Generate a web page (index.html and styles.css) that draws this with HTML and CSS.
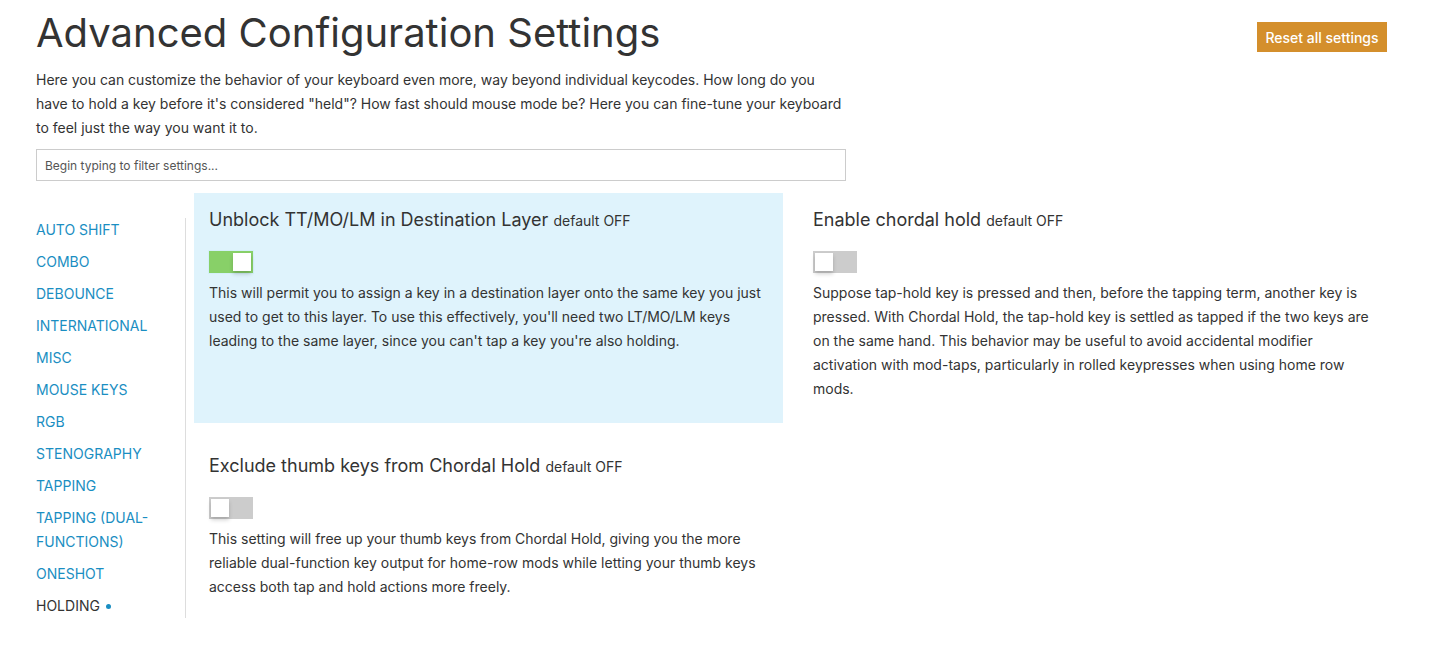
FILE: index.html
```html
<!DOCTYPE html>
<html>
<head>
<meta charset="utf-8">
<link rel="stylesheet" href="styles.css">
</head>
<body>
<div class="page">
  <header class="header">
    <h1 class="title">Advanced Configuration Settings</h1>
    <button class="reset">Reset all settings</button>
  </header>
  <p class="intro">Here you can customize the behavior of your keyboard even more, way beyond individual keycodes. How long do you have to hold a key before it's considered "held"? How fast should mouse mode be? Here you can fine-tune your keyboard to feel just the way you want it to.</p>
  <input class="filter" type="text" placeholder="Begin typing to filter settings...">
  <div class="layout">
    <nav class="sidebar">
      <a class="nav-item">AUTO SHIFT</a>
      <a class="nav-item">COMBO</a>
      <a class="nav-item">DEBOUNCE</a>
      <a class="nav-item">INTERNATIONAL</a>
      <a class="nav-item">MISC</a>
      <a class="nav-item">MOUSE KEYS</a>
      <a class="nav-item">RGB</a>
      <a class="nav-item">STENOGRAPHY</a>
      <a class="nav-item">TAPPING</a>
      <a class="nav-item">TAPPING (DUAL-FUNCTIONS)</a>
      <a class="nav-item">ONESHOT</a>
      <a class="nav-item active">HOLDING <span class="dot"></span></a>
    </nav>
    <main class="grid">
      <section class="card highlight">
        <h3 class="card-title">Unblock TT/MO/LM in Destination Layer <span class="default">default OFF</span></h3>
        <div class="toggle on"><span class="knob"></span></div>
        <p class="desc">This will permit you to assign a key in a destination layer onto the same key you just used to get to this layer. To use this effectively, you'll need two LT/MO/LM keys leading to the same layer, since you can't tap a key you're also holding.</p>
      </section>
      <section class="card">
        <h3 class="card-title">Enable chordal hold <span class="default">default OFF</span></h3>
        <div class="toggle"><span class="knob"></span></div>
        <p class="desc">Suppose tap-hold key is pressed and then, before the tapping term, another key is pressed. With Chordal Hold, the tap-hold key is settled as tapped if the two keys are on the same hand. This behavior may be useful to avoid accidental modifier activation with mod-taps, particularly in rolled keypresses when using home row mods.</p>
      </section>
      <section class="card">
        <h3 class="card-title">Exclude thumb keys from Chordal Hold <span class="default">default OFF</span></h3>
        <div class="toggle"><span class="knob"></span></div>
        <p class="desc">This setting will free up your thumb keys from Chordal Hold, giving you the more reliable dual-function key output for home-row mods while letting your thumb keys access both tap and hold actions more freely.</p>
      </section>
    </main>
  </div>
</div>
</body>
</html>
```
FILE: styles.css
```css
* { box-sizing: border-box; }
html, body { margin: 0; padding: 0; background: #fff; }
body {
  font-family: Inter, "Noto Sans", sans-serif;
  color: #333;
  font-size: 14px;
}
.page {
  width: 1387px;
  padding-left: 36px;
}
.header {
  display: flex;
  justify-content: space-between;
  align-items: flex-start;
}
.title {
  margin: 9px 0 0 0;
  font-size: 40px;
  font-weight: 400;
  line-height: 48px;
  color: #333;
  letter-spacing: 0;
}
.reset {
  margin-top: 22px;
  height: 30px;
  width: 130px;
  padding: 0;
  border: none;
  background: #d48f2c;
  color: #fff;
  font-family: Inter, sans-serif;
  font-size: 14px;
  font-weight: 500;
}
.intro {
  width: 810px;
  margin: 11px 0 9px 0;
  line-height: 24px;
  font-size: 14px;
}
.filter {
  display: block;
  width: 810px;
  height: 32px;
  border: 1px solid #ccc;
  padding: 0 8px;
  font-family: Inter, sans-serif;
  font-size: 12px;
  color: #333;
  outline: none;
}
.filter::placeholder { color: #555; }
.layout {
  display: flex;
  margin-top: 12px;
}
.sidebar {
  width: 150px;
  flex: none;
  margin-top: 25px;
  padding-right: 12px;
  border-right: 1px solid #ddd;
  display: flex;
  flex-direction: column;
  gap: 8px;
  align-self: flex-start;
}
.nav-item {
  color: #1a8ec2;
  font-size: 14px;
  line-height: 24px;
}
.nav-item.active { color: #333; }
.dot {
  display: inline-block;
  width: 5px;
  height: 5px;
  border-radius: 50%;
  background: #1a8ec2;
  vertical-align: middle;
  margin-left: 2px;
  position: relative;
  top: -1px;
}
.grid {
  margin-left: 8px;
  display: grid;
  grid-template-columns: 589px 589px;
  column-gap: 15px;
  row-gap: 16px;
}
.card {
  padding: 15px 15px 22px 15px;
}
.card.highlight { background: #dff3fc; }
.card-title {
  margin: 0;
  font-size: 18px;
  font-weight: 400;
  line-height: 24px;
  color: #333;
}
.default {
  font-size: 14px;
}
.toggle {
  margin-top: 18px;
  width: 44px;
  height: 22px;
  background: #cccccc;
  position: relative;
}
.toggle .knob {
  position: absolute;
  top: 2px;
  left: 2px;
  width: 18px;
  height: 18px;
  background: #fff;
  box-shadow: 0 3px 4px rgba(0,0,0,0.18);
}
.toggle.on {
  background: #88d068;
  box-shadow: 0 0 0 1px #d4f0f9;
}
.toggle.on .knob { left: 24px; }
.desc {
  margin: 8px 0 0 0;
  line-height: 24px;
  font-size: 14px;
  color: #333;
}
```
